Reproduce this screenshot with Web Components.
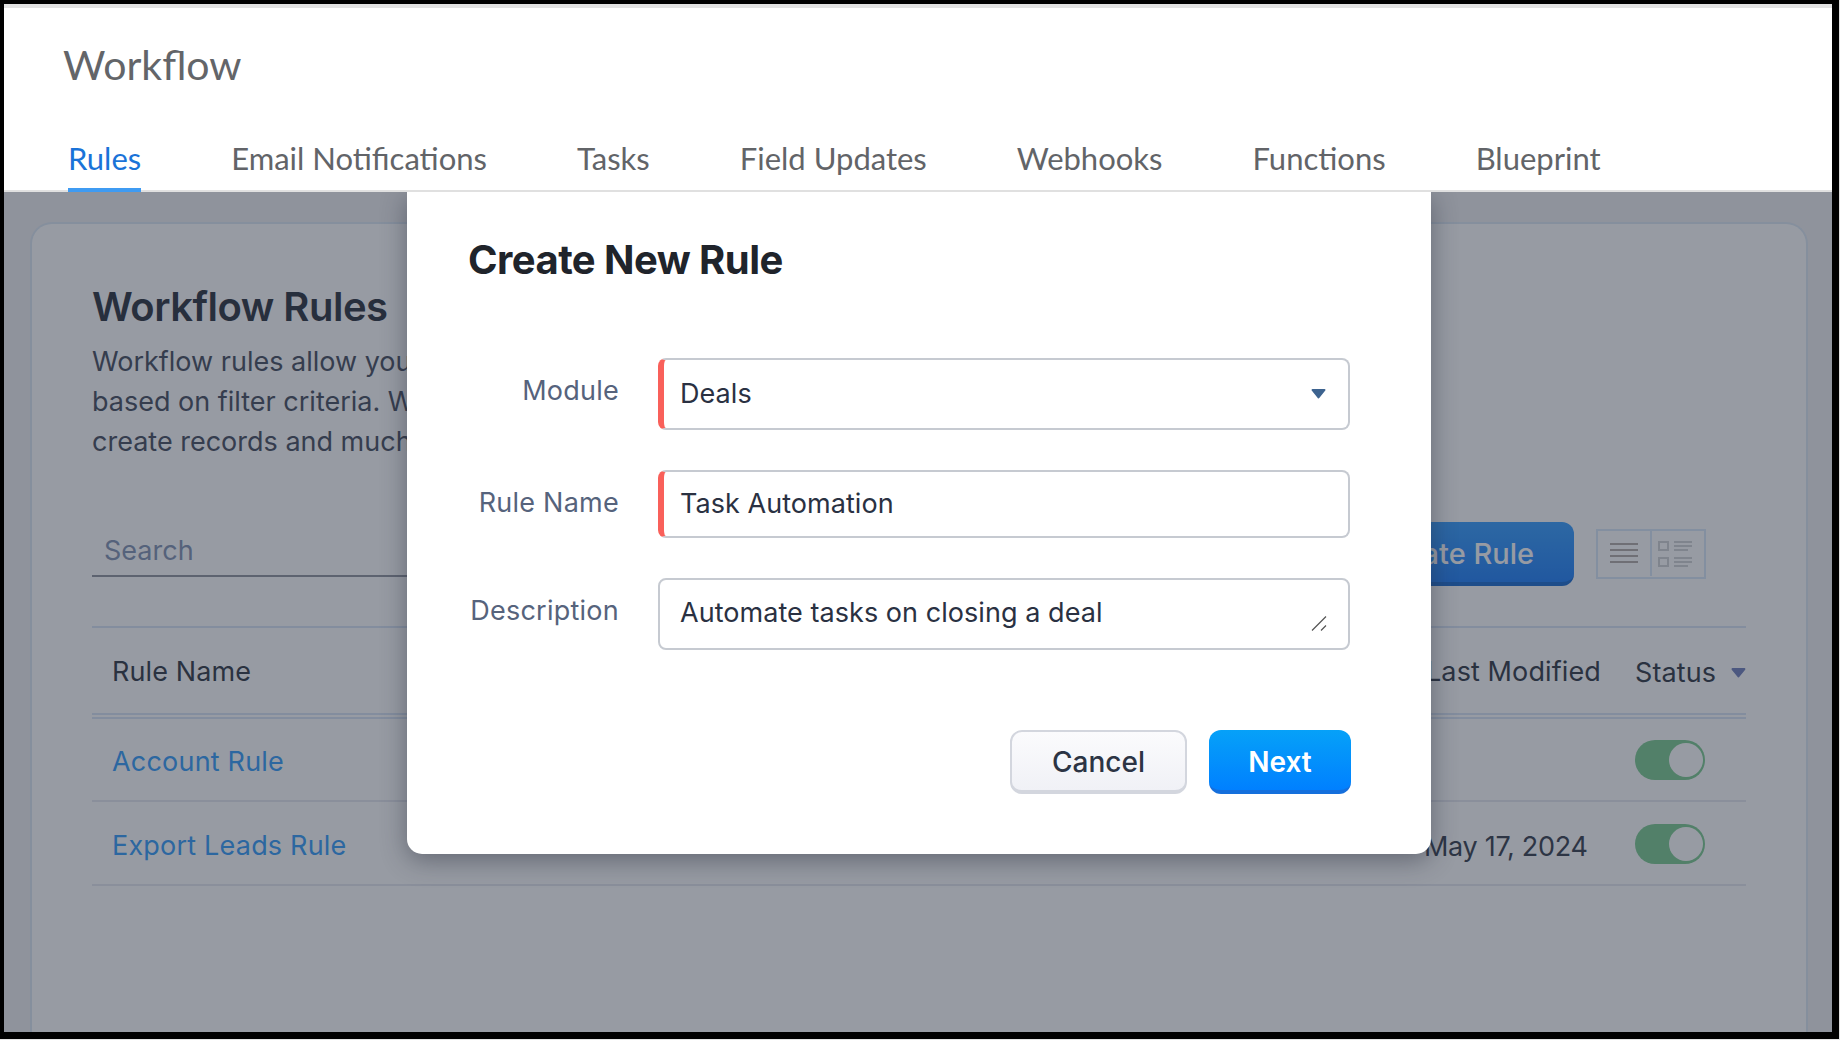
<!DOCTYPE html>
<html lang="en"><head><meta charset="utf-8"><title>Workflow</title>
<style>
html,body{margin:0;padding:0;background:#e4e4e4;width:1840px;height:1040px;overflow:hidden}
body{font-family:Inter,"Noto Sans",sans-serif}
</style></head><body>
<wf-app>
  <wf-header slot="header" title-text="Workflow">
    <wf-tab active>Rules</wf-tab><wf-tab>Email Notifications</wf-tab><wf-tab>Tasks</wf-tab><wf-tab>Field Updates</wf-tab><wf-tab>Webhooks</wf-tab><wf-tab>Functions</wf-tab><wf-tab>Blueprint</wf-tab>
  </wf-header>
  <wf-panel slot="main">
    <span slot="title">Workflow Rules</span>
    <span slot="desc">Workflow rules allow you to<br>based on filter criteria. Workflows<br>create records and much more</span>
    <wf-table slot="table">
      <wf-row link date="" >Account Rule</wf-row>
      <wf-row link date="May 17, 2024">Export Leads Rule</wf-row>
    </wf-table>
  </wf-panel>
  <wf-modal slot="modal" heading="Create New Rule">
    <wf-field label="Module" required select h="72">Deals</wf-field>
    <wf-field label="Rule Name" required h="68">Task Automation</wf-field>
    <wf-field label="Description" textarea h="72">Automate tasks on closing a deal</wf-field>
    <wf-button slot="actions">Cancel</wf-button>
    <wf-button slot="actions" primary>Next</wf-button>
  </wf-modal>
</wf-app>
<script>
function def(name, css, html, init){
  customElements.define(name, class extends HTMLElement{
    connectedCallback(){
      if(this.shadowRoot) return;
      const r=this.attachShadow({mode:'open'});
      r.innerHTML='<style>'+css+'</style>'+(typeof html==='function'?html(this):html);
      if(init) init(this,r);
    }
  });
}
def('wf-app',`
  :host{display:block;width:1840px;height:1040px;position:relative;box-sizing:border-box;overflow:hidden;background:#e4e4e4}
  .frame{position:absolute;left:0;top:0;width:1839px;height:1039px;box-sizing:border-box;border:solid #000;border-width:4px 7px 7px 4px;overflow:hidden;display:flex;flex-direction:column;background:#fff}
  .body{flex:1;position:relative;min-height:0;display:flex;flex-direction:column;overflow:hidden}
  .main{flex:1;min-height:0;position:relative;overflow:hidden}
  .dim{position:absolute;inset:0;background:rgba(47,56,72,.5)}
  .modal{position:absolute;left:403px;top:0}
`,`<div class="frame"><slot name="header"></slot><div class="body"><div class="main"><slot name="main"></slot><div class="dim"></div></div><div class="modal"><slot name="modal"></slot></div></div></div>`);

def('wf-header',`
  :host{display:block;background:#fff;border-top:4px solid #e2e2e2;border-bottom:2px solid #e0e0e0;height:182px;box-sizing:content-box;font-family:Lato,sans-serif}
  h1{margin:0;padding:27px 0 0 59px;font:400 41px/60px Lato,sans-serif;color:#636569;height:60px}
  nav{display:flex;gap:90px;padding-left:64px;margin-top:31px;height:64px}
`,h=>`<h1>${h.getAttribute('title-text')}</h1><nav><slot></slot></nav>`);

def('wf-tab',`
  :host{display:block;box-sizing:border-box;font:400 31px/50px Lato,sans-serif;color:#626468;padding:7px 0 0;position:relative;margin-bottom:-2px;height:66px}
  :host([active]){color:#1a73d8;border-bottom:4px solid #3f9bf2}
`,`<slot></slot>`);

def('wf-panel',`
  :host{display:block;height:100%;box-sizing:border-box;background:#efeef0;padding:30px 24px 0 26px}
  .card{background:#fff;border:2px solid #dbe6f2;border-bottom:0;border-radius:22px 22px 0 0;height:900px;box-sizing:border-box;padding:54px 60px 0 60px}
  h2{margin:0;font:600 40px/58px Inter,sans-serif;letter-spacing:-.5px;color:#1f2633}
  p{margin:6px 0 0;font:400 27px/40px Inter,sans-serif;letter-spacing:0;color:#3a4354;white-space:nowrap}
  .tools{display:flex;justify-content:space-between;align-items:flex-start;height:104px;border-bottom:2px solid #d6e3f4;margin-top:60px}
  .search{width:640px;height:55px;box-sizing:border-box;border-bottom:2px solid #8b8f98;padding:10px 0 0 12px;font:400 27px/38px Inter,sans-serif;letter-spacing:0;color:#7a8cae}
  .right{display:flex;align-items:center;gap:22px}
  .create{width:240px;height:64px;box-sizing:border-box;border-radius:12px;border-bottom:4px solid #0d63cc;background:linear-gradient(#2a98ff,#1278f8);color:#fff;font:500 29px/64px Inter,sans-serif;text-align:right;padding-right:40px}
`,`<div class="card"><h2><slot name="title"></slot></h2><p><slot name="desc"></slot></p>
  <div class="tools"><div class="search">Search</div><div class="right"><div class="create">Create Rule</div><wf-view></wf-view></div></div>
  <slot name="table"></slot></div>`);

def('wf-view',`
  :host{display:block;width:110px;height:50px;margin-right:40px}
  svg{display:block}
`,`<svg width="110" height="50" viewBox="0 0 110 50" fill="none">
  <rect x="1" y="1" width="108" height="48" stroke="#d6e6f8" stroke-width="2"/>
  <path d="M55 1V47" stroke="#d6e6f8" stroke-width="2"/>
  <path d="M14 15H42M14 21H42M14 27H42M14 33H42" stroke="#aea6a2" stroke-width="2"/>
  <rect x="63" y="13" width="9" height="8" stroke="#cfd0d2" stroke-width="2"/>
  <rect x="63" y="29" width="9" height="8" stroke="#cfd0d2" stroke-width="2"/>
  <path d="M78 13H96M78 17H96M78 21H92M78 29H96M78 33H96M78 37H92" stroke="#cfd0d2" stroke-width="2"/>
</svg>`);

def('wf-table',`
  :host{display:block}
  .head{display:grid;grid-template-columns:1fr 207px 111px;height:83px;padding-top:2px;align-items:center;border-bottom:2px solid #d6e3f4;font:400 27px/40px Inter,sans-serif;letter-spacing:.1px;color:#252c39}
  .gap{height:2px}
  .line{height:2px;background:#d6e3f4;margin-bottom:-1px}
  .n{padding-left:20px}
  .l{margin-left:-2px}
  .s{display:flex;align-items:center;gap:15px;margin-top:2px}
  svg{display:block}
`,`<div class="head"><div class="n">Rule Name</div><div class="l">Last Modified</div><div class="s">Status <svg width="15" height="10" viewBox="0 0 15 10"><path d="M1.5 1H13.5L7.5 8.5Z" fill="#6878b8" stroke="#6878b8" stroke-linejoin="round" stroke-width="2"/></svg></div></div><div class="gap"></div><div class="line"></div><slot></slot>`);

def('wf-row',`
  :host{display:grid;grid-template-columns:1fr 207px 111px;height:82px;align-items:center;border-bottom:2px solid #e4e7ee;font:400 27px/40px Inter,sans-serif;letter-spacing:.2px;color:#2b3342}
  .n{padding:5px 0 0 20px;color:#2996f8}
  .d{margin-left:-4px;margin-top:8px;letter-spacing:-.3px}
  wf-toggle{margin-top:1px}
`,h=>`<div class="n"><slot></slot></div><div class="d">${h.getAttribute('date')||''}</div><wf-toggle></wf-toggle>`);

def('wf-toggle',`
  :host{display:block;width:70px;height:40px;border-radius:20px;background:#75c88a;position:relative}
  i{position:absolute;right:2px;top:3px;width:34px;height:34px;border-radius:50%;background:#fff}
`,`<i></i>`);

def('wf-modal',`
  :host{display:flex;flex-direction:column;width:1024px;height:662px;box-sizing:border-box;background:#fff;border-radius:0 0 15px 15px;box-shadow:0 6px 26px rgba(35,40,55,.45);padding:0 81px 0 61px}
  h3{margin:0;font:700 40px/60px Inter,sans-serif;letter-spacing:-.55px;color:#20242b;padding-top:38px;height:60px}
  .form{margin-top:68px;display:flex;flex-direction:column;gap:40px}
  .act{display:flex;justify-content:flex-end;gap:22px;margin:80px -1px 0 0}
`,h=>`<h3>${h.getAttribute('heading')}</h3><div class="form"><slot></slot></div><div class="act"><slot name="actions"></slot></div>`);

def('wf-field',`
  :host{display:flex;align-items:stretch;gap:39px}
  label{width:151px;flex:none;text-align:right;font:400 27px/40px Inter,sans-serif;letter-spacing:.25px;color:#56637c;white-space:nowrap;padding-top:13px}
  .box{flex:1;box-sizing:border-box;position:relative;border:2px solid #c6cad1;border-radius:8px;background:#fff;padding:0 20px;font:400 27px/40px Inter,sans-serif;letter-spacing:.05px;color:#2a3142;display:flex;align-items:center;overflow:hidden}
  :host([required]) .box{border-left:6px solid #f9605a;padding-left:16px}
  :host([textarea]) .box{align-items:flex-start;padding-top:13px}
  svg{position:absolute;display:block}
  .caret{right:22px;top:29px}
  .grip{right:21px;bottom:17px}
`,h=>{
  const hh=h.getAttribute('h');
  let extra='';
  if(h.hasAttribute('select')) extra=`<svg class="caret" width="15" height="10" viewBox="0 0 15 10"><path d="M1.5 1H13.5L7.5 8.5Z" fill="#3d638f" stroke="#3d638f" stroke-linejoin="round" stroke-width="2"/></svg>`;
  if(h.hasAttribute('textarea')) extra=`<svg class="grip" width="16" height="15" viewBox="0 0 16 15"><path d="M1 14.5L15 .5M10 14.5L15 9.5" stroke="#555" stroke-width="1.2" fill="none"/></svg>`;
  return `<label>${h.getAttribute('label')}</label><div class="box" style="height:${hh}px"><span><slot></slot></span>${extra}</div>`;
});

def('wf-button',`
  :host{display:block;box-sizing:border-box;height:64px;width:177px;border-radius:12px;border:2px solid #d3d6de;border-bottom-width:4px;background:linear-gradient(#fbfbfd,#f0f1f6);color:#2c3444;font:500 28px/60px Inter,sans-serif;text-align:center}
  :host([primary]){width:142px;border:0;border-bottom:4px solid #156fdc;background:linear-gradient(#06a1f8,#0080ff);color:#fff;font-weight:600;line-height:64px}
`,`<slot></slot>`);
</script>
</body></html>
